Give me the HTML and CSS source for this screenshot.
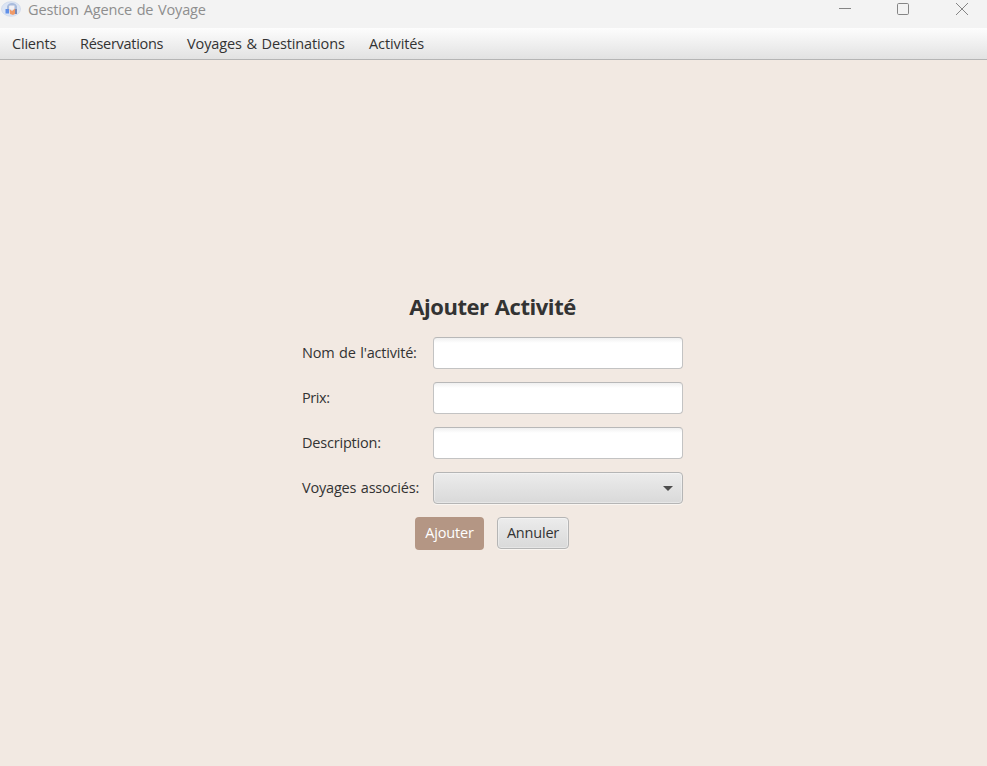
FILE: index.html
```
<!DOCTYPE html>
<html lang="fr">
<head>
<meta charset="utf-8">
<title>Gestion Agence de Voyage</title>
<link rel="stylesheet" href="styles.css">
</head>
<body>
<header class="titlebar">
  <svg class="app-icon" width="20" height="16" viewBox="0 0 20 16">
    <ellipse cx="10" cy="8" rx="9.5" ry="7.3" fill="#dce5f4" stroke="#c9d4ea" stroke-width=".7"/>
    <path d="M6 5.5Q7 2 11 2T16 5.5V9H13V5H8V8H6Z" fill="#a9bbdc"/>
    <rect x="8.5" y="4.5" width="5" height="4" fill="#f4f1f4"/>
    <rect x="4.5" y="8" width="3.5" height="4.5" fill="#5f8fe8"/>
    <path d="M8.5 8L11 10L14 7.5L15 12.5L12 14L9 13Z" fill="#f09a68"/>
    <path d="M14 8H16V13H14Z" fill="#7788b5"/>
  </svg>
  <span class="window-title">Gestion Agence de Voyage</span>
  <svg class="window-controls" width="132" height="20" viewBox="0 0 132 20" fill="none" stroke="#858585">
    <path d="M4 8.5H16"/>
    <rect x="62.5" y="3.5" width="11" height="11" rx="1.2"/>
    <path d="M121 3L133 15M133 3L121 15"/>
  </svg>
</header>
<nav class="menubar">
  <a class="menu m-clients">Clients</a>
  <a class="menu m-reservations">Réservations</a>
  <a class="menu m-voyages">Voyages &amp; Destinations</a>
  <a class="menu m-activites">Activités</a>
</nav>
<main class="content">
  <h1 class="heading">Ajouter Activité</h1>
  <form class="form">
    <label class="label" for="nom">Nom de l'activité:</label>
    <input class="field" id="nom" type="text">
    <label class="label l-prix" for="prix">Prix:</label>
    <input class="field" id="prix" type="text">
    <label class="label" for="description">Description:</label>
    <input class="field" id="description" type="text">
    <span class="label">Voyages associés:</span>
    <div class="combo"><span class="arrow"></span></div>
  </form>
  <div class="actions">
    <button class="button primary" type="button">Ajouter</button>
    <button class="button" type="button">Annuler</button>
  </div>
</main>
</body>
</html>
```
FILE: styles.css
```
* { box-sizing: border-box; }
body {
  margin: 0;
  height: 766px;
  overflow: hidden;
  display: flex;
  flex-direction: column;
  background: #f2e9e2;
  color: #333;
  font: 14.5px/20px "Open Sans", "Noto Sans", sans-serif;
  letter-spacing: -0.2px;
  word-spacing: 1px;
}
.titlebar {
  height: 28px;
  flex: none;
  display: flex;
  align-items: flex-start;
  padding: 0 20px 0 1px;
  background: #f3f3f3;
  color: #8e8e8e;
}
.app-icon { margin: 1px 7px 0 0; flex: none; }
.window-title {
  white-space: nowrap;
  letter-spacing: -0.14px;
}
.window-controls { margin-left: auto; overflow: visible; }
.menubar {
  height: 32px;
  flex: none;
  display: flex;
  gap: 24px;
  padding: 6px 12px 0;
  background: linear-gradient(#fdfdfd, #e2e2e2);
  border-bottom: 1px solid #b5b5b5;
}
.menu { white-space: nowrap; }
.m-clients { width: 44px; }
.m-reservations { width: 83px; letter-spacing: -0.3px; }
.m-voyages { width: 158px; letter-spacing: -0.12px; }
.m-activites { letter-spacing: -0.1px; }
.content {
  display: flex;
  flex-direction: column;
  align-items: center;
  padding: 230px 4px 0 0;
}
.heading {
  margin: 0 0 15px;
  font-size: 22px;
  line-height: 32px;
  font-weight: 700;
  letter-spacing: -0.45px;
  word-spacing: 1px;
  white-space: nowrap;
  position: relative;
  left: 1px;
}
.form {
  display: grid;
  grid-template-columns: 118px 250px;
  grid-auto-rows: 32px;
  gap: 13px;
  align-items: center;
  margin-left: 2px;
}
.label { white-space: nowrap; }
.l-prix { letter-spacing: -0.4px; }
.field, .combo {
  width: 250px;
  height: 32px;
  margin: 0;
  border: 1px solid #c3c3c3;
  border-top-color: #b8b8b8;
  border-radius: 4px;
}
.field {
  padding: 4px 9px;
  outline: 0;
  background: linear-gradient(#f0f0f0, #fff 5px);
  font: inherit;
}
.combo {
  display: flex;
  align-items: center;
  justify-content: flex-end;
  padding-right: 9px;
}
.arrow {
  border: 5px solid transparent;
  border-top-color: #4d4d4d;
  border-bottom: 0;
}
.combo, .button {
  border: 1px solid #b5b5b5;
  background: linear-gradient(#ececec, #d9d9d9);
  box-shadow: inset 0 0 0 1px rgba(255, 255, 255, .35), 0 1px 0 #f9f5f1;
}
.actions {
  display: flex;
  gap: 13px;
  margin-top: 13px;
}
.button {
  width: 72px;
  height: 32px;
  padding: 0 0 1px 1px;
  border-radius: 4px;
  color: #333;
  font: inherit;
  letter-spacing: inherit;
}
.primary {
  width: 69px;
  height: 33px;
  padding-bottom: 2px;
  border: 0;
  background: #b49684;
  box-shadow: none;
  color: #fff;
}
```
